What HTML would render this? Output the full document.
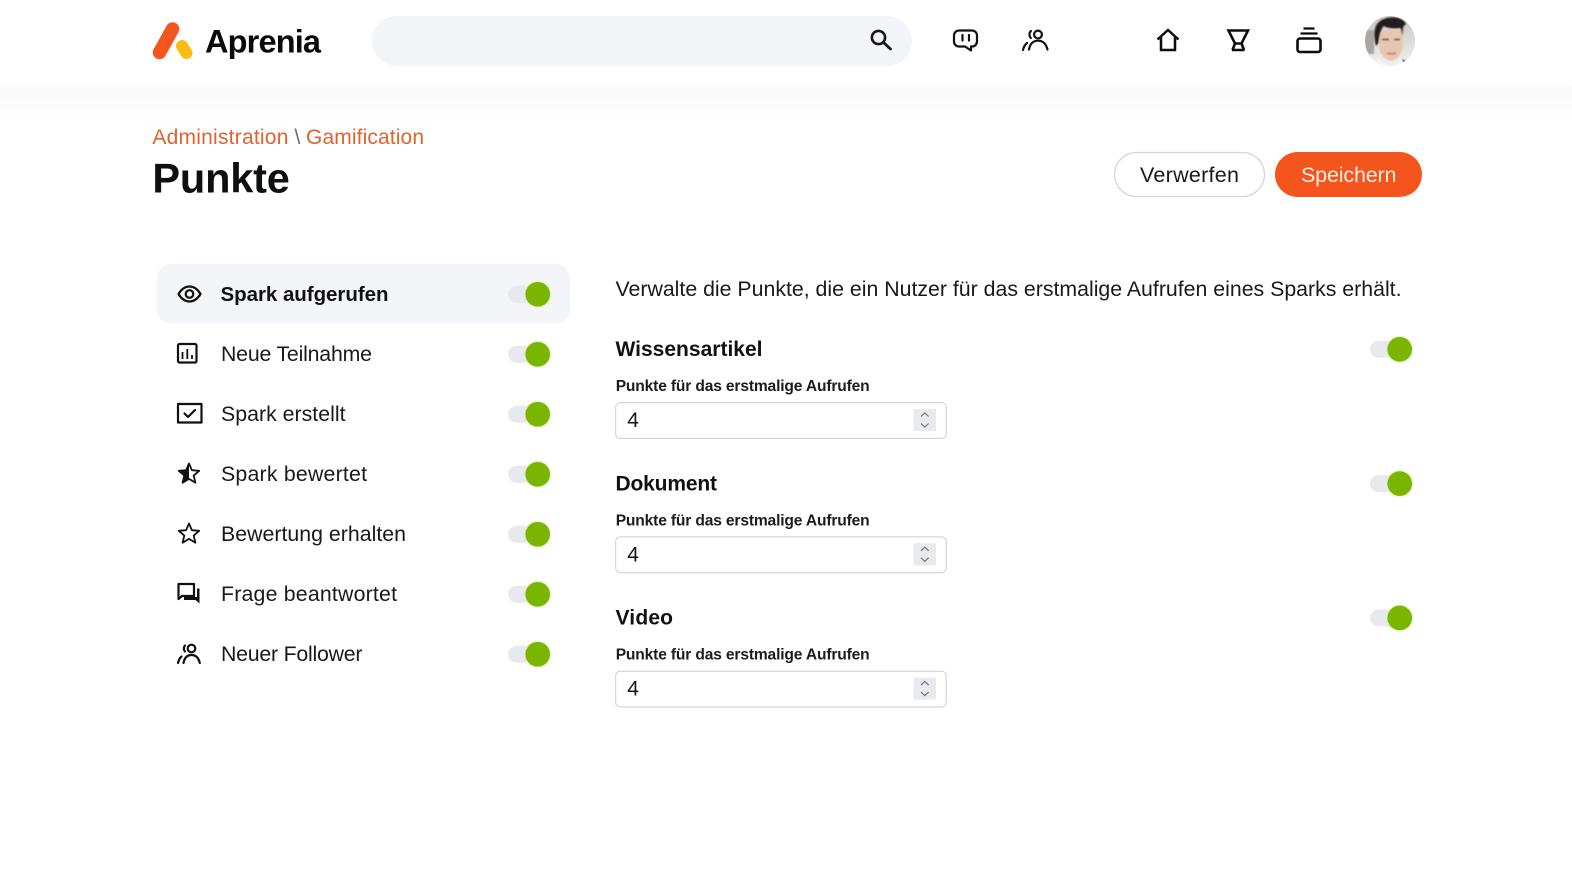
<!DOCTYPE html>
<html lang="de">
<head>
<meta charset="utf-8">
<title>Aprenia – Punkte</title>
<style>
html,body{margin:0;padding:0;background:#fff;width:1572px;height:885px;overflow:hidden}
svg{display:block}
text{font-family:"Liberation Sans",sans-serif;fill:#17191d}
.it{font-size:21.3px}
.h{font-size:21px;font-weight:700;fill:#101114}
.l{font-size:15.6px;font-weight:700;fill:#1a1c20}
.n{font-size:21px;fill:#14161a}
.ic{fill:none;stroke:#111;stroke-width:2.2;stroke-linecap:round;stroke-linejoin:round}
</style>
</head>
<body>
<svg width="1572" height="885" viewBox="0 0 1572 885" xmlns="http://www.w3.org/2000/svg">
<defs>
<linearGradient id="band" x1="0" y1="0" x2="0" y2="1"><stop offset="0" stop-color="#f9f9fa"/><stop offset="1" stop-color="#fff"/></linearGradient>
<linearGradient id="avbg" x1="0" y1="0" x2="0" y2="1"><stop offset="0" stop-color="#c9c6c4"/><stop offset="1" stop-color="#f2f1f0"/></linearGradient>
<clipPath id="av"><circle cx="1390" cy="41" r="25"/></clipPath>
<filter id="bl" x="-10%" y="-10%" width="120%" height="120%"><feGaussianBlur stdDeviation=".8"/></filter>
<g id="tg">
<rect x="0" y="-8.5" width="37" height="17" rx="8.5" fill="#e8e9ee"/>
<circle cx="29.700" cy="0" r="13.400" fill="#d6f3a6" opacity=".7"/>
<circle cx="29.700" cy="0" r="12.300" fill="#7ab502"/>
</g>
<g id="inp">
<rect x="615.700" y="402.600" width="330.500" height="35.800" rx="4.500" fill="#fff" stroke="#cbcdd2" stroke-width="1"/>
<rect x="913.500" y="409" width="22.500" height="22" fill="#e9eaef"/>
<path d="M921 416.500l3.800-3.600 3.800 3.600M921 423.500l3.800 3.600 3.800-3.600" fill="none" stroke="#74767c" stroke-width="1.200"/>
</g>
</defs>

<rect x="0" y="85" width="1572" height="40" fill="url(#band)"/>

<!-- Logo -->
<line x1="159.500" y1="52.500" x2="172.500" y2="29" stroke="#f4551c" stroke-width="13.500" stroke-linecap="round"/>
<line x1="182" y1="46" x2="186.500" y2="53" stroke="#fbbc13" stroke-width="12" stroke-linecap="round"/>
<text x="205" y="52.500" font-size="32.500" font-weight="700" textLength="116" style="fill:#0a0a0a">Aprenia</text>

<!-- Search -->
<rect x="372" y="16" width="540" height="50" rx="25" fill="#f4f5f9"/>
<circle cx="878.500" cy="37.500" r="6.600" fill="none" stroke="#15171a" stroke-width="2.600"/>
<line x1="883.500" y1="42.500" x2="890.500" y2="49" stroke="#15171a" stroke-width="2.800" stroke-linecap="round"/>

<!-- Chat -->
<path class="ic" d="M959 30.500h13a5 5 0 0 1 5 5v6a5 5 0 0 1-5 5h-1v4l-6-4h-6a5 5 0 0 1-5-5v-6a5 5 0 0 1 5-5z" stroke-width="2.500"/>
<path class="ic" d="M962.500 35v5.500M969 35v5.500" stroke-width="2.500"/>

<!-- People -->
<circle cx="1038" cy="34.500" r="3.900" class="ic" stroke-width="2"/>
<path class="ic" d="M1029 49.500c1-6 4.500-8.800 9-8.800s8 2.800 9.500 8.800" stroke-width="2.200"/>
<path class="ic" d="M1031 31c-2 1.500-2 5-.2 7M1023 50c.6-3 2-5.300 4-7" stroke-width="2.400"/>

<!-- Home -->
<path d="M1157.500 39.500l10.500-9.500 10.500 9.500M1161 37v13h14V37" fill="none" stroke="#0c0c0c" stroke-width="2.500" stroke-linejoin="miter"/>

<!-- Goblet -->
<path d="M1228.500 30.500h19.500l-6.500 13h-6.500zM1235 43.500l-2.500 6.500M1241.500 43.500l2.500 6.500M1232 50h12.500" fill="none" stroke="#0c0c0c" stroke-width="2.600"/>

<!-- Stack -->
<rect x="1297.500" y="38.500" width="23" height="13.500" rx="2.500" fill="none" stroke="#0c0c0c" stroke-width="2.600"/>
<path d="M1300.500 33.500h17M1303.500 28.500h11" stroke="#0c0c0c" stroke-width="2.200"/>

<!-- Avatar -->
<g clip-path="url(#av)">
<rect x="1365" y="16" width="50" height="50" fill="url(#avbg)"/>
<g filter="url(#bl)">
<path d="M1365 30h9v24h-9z" fill="#a9a6a5"/>
<path d="M1379 34q10-6 23-4l1 16q-2 12-12 15q-10-2-12-14z" fill="#e8c7b0"/>
<path d="M1376 46c-3-11-3-23 8-27c8-3 19-2 22 5l-3 3l-.5 9l-2-8c-7 1-13 0-17-2c-3 4-4 10-5 17z" fill="#211f1f"/>
<path d="M1382 39.500h7M1394 39.500h6" stroke="#3a2c26" stroke-width="1.500"/>
<path d="M1387 53q5 1.500 9 0" stroke="#a8685a" stroke-width="1.400" fill="none"/>
<path d="M1378 58l11 8h-14zM1401 58l-5 8h14z" fill="#f6f3f0"/>
<path d="M1402 59l5 2.500-3 3z" fill="#34435f"/>
</g>
</g>

<!-- Heading -->
<text x="152.400" y="144" font-size="21" textLength="136" style="fill:#e0622d">Administration</text>
<text x="294.500" y="144" font-size="21" style="fill:#6b6d72">\</text>
<text x="306" y="144" font-size="21" textLength="118" style="fill:#e0622d">Gamification</text>
<text x="152.400" y="192.500" font-size="41.500" font-weight="700" textLength="137.500" style="fill:#0e0f12">Punkte</text>

<!-- Buttons -->
<rect x="1114.500" y="152.500" width="150" height="44" rx="22" fill="#fff" stroke="#d3d4d8" stroke-width="1.200"/>
<text x="1140" y="182" font-size="21.500" textLength="99">Verwerfen</text>
<rect x="1275" y="152" width="147" height="45" rx="22.500" fill="#f4551c"/>
<text x="1301" y="182" font-size="21.500" font-weight="400" textLength="95.500" style="fill:#fdeee6">Speichern</text>

<!-- Sidebar -->
<rect x="157" y="264" width="413" height="59.500" rx="14" fill="#f4f5f9"/>

<path class="ic" d="M178.500 294c3-5 6.500-7.500 11-7.500s8 2.500 11 7.500c-3 5-6.500 7.500-11 7.500s-8-2.500-11-7.500z"/>
<circle class="ic" cx="189.500" cy="294" r="3.800"/>
<text class="it" x="220.500" y="301" font-size="21" font-weight="700" textLength="168" style="fill:#101114;font-size:20.500px">Spark aufgerufen</text>
<use href="#tg" x="508" y="294.300"/>

<rect x="178" y="344" width="18.500" height="18.500" rx="1.500" class="ic"/>
<path d="M182.500 352v7M187.300 349v10M192 355v4" stroke="#111" stroke-width="1.800"/>
<text class="it" x="221" y="361" textLength="151">Neue Teilnahme</text>
<use href="#tg" x="508" y="354.300"/>

<rect x="178" y="404" width="23.500" height="18.500" class="ic" stroke-linejoin="miter"/>
<path class="ic" d="M184.500 413.500l3.500 3.500 7-7" stroke-width="1.700"/>
<text class="it" x="221" y="421" textLength="124.500">Spark erstellt</text>
<use href="#tg" x="508" y="414.300"/>

<path d="M189 463.500l2.900 6.700 7.300.6-5.500 4.800 1.700 7.100-6.400-3.800-6.400 3.800 1.700-7.100-5.500-4.800 7.300-.6z" fill="none" stroke="#111" stroke-width="1.800" stroke-linejoin="round"/>
<path d="M189 463.500l-2.900 6.700-7.300.6 5.500 4.800-1.700 7.100 6.400-3.800z" fill="#111"/>
<text class="it" x="221" y="481" textLength="146">Spark bewertet</text>
<use href="#tg" x="508" y="474.300"/>

<path d="M189 523.500l2.900 6.700 7.300.6-5.500 4.800 1.700 7.100-6.400-3.800-6.400 3.800 1.700-7.100-5.500-4.800 7.300-.6z" fill="none" stroke="#111" stroke-width="1.800" stroke-linejoin="round"/>
<text class="it" x="221" y="541" textLength="185">Bewertung erhalten</text>
<use href="#tg" x="508" y="534.300"/>

<path class="ic" d="M178.500 584h15.500v12h-12l-3.500 3z" stroke-linejoin="miter"/>
<path d="M197 588.500h2.500v15l-4-3.500H184v-3h13z" fill="#111"/>
<text class="it" x="221" y="601" textLength="176">Frage beantwortet</text>
<use href="#tg" x="508" y="594.300"/>

<circle cx="191.500" cy="648.500" r="3.800" class="ic" stroke-width="2"/>
<path class="ic" d="M183.500 663c1-5.500 3.800-8 8-8s7 2.500 8.300 8" stroke-width="2"/>
<path class="ic" d="M185 645.500c-1.500 1.500-1.500 4.500 0 6M178 663c.6-2.800 1.800-5 3.500-6.500" stroke-width="2.200"/>
<text class="it" x="221" y="661" textLength="141.500">Neuer Follower</text>
<use href="#tg" x="508" y="654.300"/>

<!-- Right column -->
<text class="it" x="615.500" y="296" textLength="786">Verwalte die Punkte, die ein Nutzer für das erstmalige Aufrufen eines Sparks erhält.</text>

<text class="h" x="615.500" y="356" textLength="147">Wissensartikel</text>
<use href="#tg" x="1370" y="349.300"/>
<text class="l" x="615.700" y="391" textLength="254">Punkte für das erstmalige Aufrufen</text>
<use href="#inp"/>
<text class="n" x="627.300" y="427">4</text>

<text class="h" x="615.500" y="490.300" textLength="101.500">Dokument</text>
<use href="#tg" x="1370" y="483.600"/>
<text class="l" x="615.700" y="525.300" textLength="254">Punkte für das erstmalige Aufrufen</text>
<use href="#inp" y="134.300"/>
<text class="n" x="627.300" y="561.300">4</text>

<text class="h" x="615.500" y="624.600" textLength="57.500">Video</text>
<use href="#tg" x="1370" y="617.900"/>
<text class="l" x="615.700" y="659.600" textLength="254">Punkte für das erstmalige Aufrufen</text>
<use href="#inp" y="268.600"/>
<text class="n" x="627.300" y="695.600">4</text>
</svg>
</body>
</html>
